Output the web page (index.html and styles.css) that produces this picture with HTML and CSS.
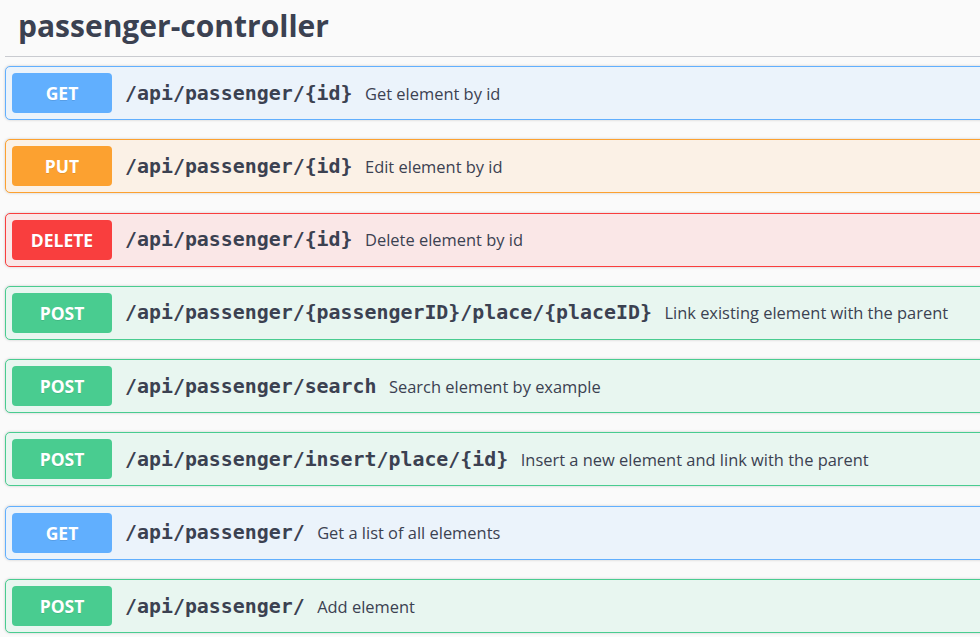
FILE: index.html
```html
<!DOCTYPE html>
<html>
<head>
<meta charset="utf-8">
<link rel="stylesheet" href="styles.css">
</head>
<body>
<div class="wrap">
  <div class="tag">
    <h4 class="tag-title">passenger-controller</h4>
  </div>
  <div class="ops">
    <div class="op get"><span class="method">GET</span><span class="path">/api/passenger/{id}</span><span class="desc">Get element by id</span></div>
    <div class="op put"><span class="method">PUT</span><span class="path">/api/passenger/{id}</span><span class="desc">Edit element by id</span></div>
    <div class="op delete"><span class="method">DELETE</span><span class="path">/api/passenger/{id}</span><span class="desc">Delete element by id</span></div>
    <div class="op post"><span class="method">POST</span><span class="path">/api/passenger/{passengerID}/place/{placeID}</span><span class="desc">Link existing element with the parent</span></div>
    <div class="op post"><span class="method">POST</span><span class="path">/api/passenger/search</span><span class="desc">Search element by example</span></div>
    <div class="op post"><span class="method">POST</span><span class="path">/api/passenger/insert/place/{id}</span><span class="desc">Insert a new element and link with the parent</span></div>
    <div class="op get"><span class="method">GET</span><span class="path">/api/passenger/</span><span class="desc">Get a list of all elements</span></div>
    <div class="op post"><span class="method">POST</span><span class="path">/api/passenger/</span><span class="desc">Add element</span></div>
  </div>
</div>
</body>
</html>
```
FILE: styles.css
```css
html, body {
  margin: 0;
  padding: 0;
  background: #fafafa;
  overflow: hidden;
}
body {
  font-family: "Open Sans", sans-serif;
  color: #3b4151;
}
.wrap {
  width: 1200px;
  padding-left: 5px;
}
.tag {
  padding: 5px 0 10px 13px;
  border-bottom: 1px solid #c9cbd0;
  margin-bottom: 9px;
}
.tag-title {
  margin: 0;
  font-size: 30px;
  font-weight: 700;
  line-height: normal;
  color: #3b4151;
}
.op {
  display: flex;
  align-items: center;
  padding: 6px;
  border: 1px solid;
  border-radius: 5px;
  margin-bottom: 19.3px;
  box-shadow: 0 0 3px rgba(0,0,0,.19);
}
.method {
  width: 100px;
  height: 40px;
  flex: none;
  display: flex;
  align-items: center;
  justify-content: center;
  border-radius: 4px;
  color: #fff;
  font-size: 17.5px;
  font-weight: 700;
  text-shadow: 0 1px 0 rgba(0,0,0,.1);
}
.path {
  padding: 0 12.5px 0 13px;
  font-family: "DejaVu Sans Mono", monospace;
  font-weight: 700;
  font-size: 19.9px;
  color: #3b4151;
  white-space: nowrap;
}
.desc {
  font-size: 16.45px;
  color: #3b4151;
  white-space: nowrap;
}
.get { border-color: #61affe; background: #ebf3fb; }
.get .method { background: #61affe; }
.put { border-color: #fca130; background: #fbf1e6; }
.put .method { background: #fca130; }
.delete { border-color: #f93e3e; background: #fae7e7; }
.delete .method { background: #f93e3e; }
.post { border-color: #49cc90; background: #e8f6f0; }
.post .method { background: #49cc90; }
```
